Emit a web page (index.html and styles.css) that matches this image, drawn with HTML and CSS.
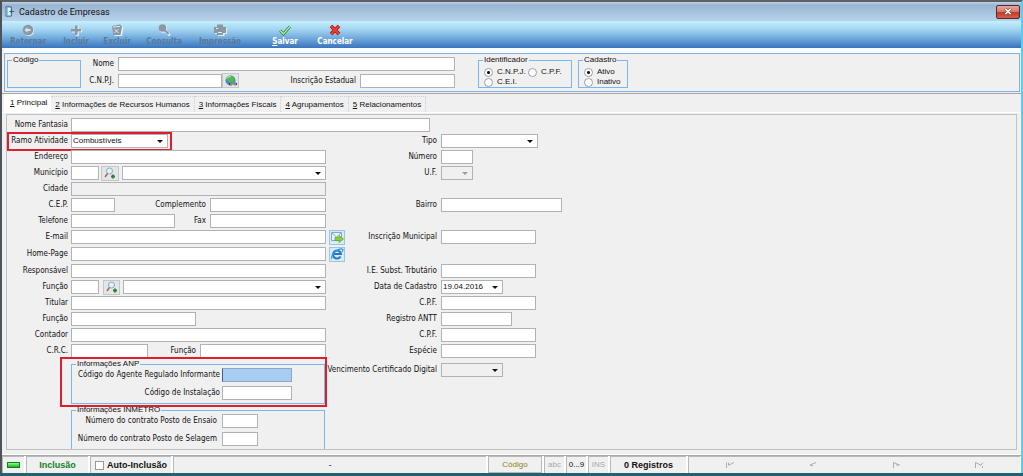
FILE: index.html
```html
<!DOCTYPE html>
<html lang="pt-BR">
<head>
<meta charset="utf-8">
<title>Cadastro de Empresas</title>
<link rel="stylesheet" href="styles.css">
</head>
<body>
<div class="window">
  <header class="titlebar">
    <svg class="title-icon" viewBox="0 0 12 12"><path d="M2 1h6v10H2z" fill="#e8f4fc" stroke="#24567f"/><path d="M1 3l3-2v10l-3-1z" fill="#6fa8cf"/><path d="M6 6h5M8 4v4" stroke="#24567f" fill="none"/></svg>
    <h1 class="title">Cadastro de Empresas</h1>
    <button class="close" aria-label="Fechar"><svg viewBox="0 0 8 8"><path d="M1 1l6 6M7 1L1 7" stroke="#5b2a2a" stroke-width="3"/><path d="M1 1l6 6M7 1L1 7" stroke="#fff" stroke-width="1.8"/></svg></button>
  </header>

  <nav class="toolbar">
    <button class="tool tool-retornar" disabled><svg viewBox="0 0 14 12"><circle cx="7.8" cy="6.7" r="5.3" fill="#dceffa"/><circle cx="7" cy="6" r="5.3" fill="#8b98a0"/><path d="M9.5 5H6.5V3L3.5 6l3 3V7h3z" fill="#d5e4ec"/></svg><span>Retornar</span></button>
    <button class="tool tool-incluir" disabled><svg viewBox="0 0 14 12"><path d="M6.800 2.300h3v3.500h3.500v2.500H9.800V12h-3V8.500H3V5.800h3.800z" fill="#dceffa"/><path d="M6 1.500h2.500V5H12v2.500H8.500V11H6V7.500H2V5h4z" fill="#8b98a0"/></svg><span>Incluir</span></button>
    <button class="tool tool-excluir" disabled><svg viewBox="0 0 14 12"><path d="M3 3l9.500-1 1 2L12 12H4.500z" fill="#dceffa"/><path d="M2 2l8-1.500 2 2L10.500 11h-7z" fill="#8b98a0"/><path d="M4.500 5l4 4M8.500 5l-4 4M3 3l7-.5" stroke="#dceffa" fill="none"/></svg><span>Excluir</span></button>
    <button class="tool tool-consulta" disabled><svg viewBox="0 0 14 12"><circle cx="6.300" cy="4.800" r="4" fill="#dceffa"/><path d="M8 7l5 4.500" stroke="#dceffa" stroke-width="2.500"/><circle cx="5.500" cy="4" r="3.800" fill="#8b98a0"/><path d="M7.500 6l4 4" stroke="#8b98a0" stroke-width="2"/></svg><span>Consulta</span></button>
    <button class="tool tool-impressao" disabled><svg viewBox="0 0 14 12"><path d="M2 4h12v6h-2.500V12H5V10H2z" fill="#dceffa"/><path d="M4 .5h6V3h3v6h-3v2H4V9H1V3h3z" fill="#8b98a0"/><path d="M5 8.500h4M3 4.500h2" stroke="#dceffa"/></svg><span>Impressão</span></button>
    <button class="tool tool-salvar"><svg viewBox="0 0 14 12"><path d="M2 6.500l3.500 3.500L12 2.500" stroke="#2f8a3c" stroke-width="2.800" fill="none"/><path d="M2 6.500l3.500 3.300L12 2.500" stroke="#b9f0a8" stroke-width="1.200" fill="none"/></svg><span><u>S</u>alvar</span></button>
    <button class="tool tool-cancelar"><svg viewBox="0 0 14 12"><path d="M3 2l8 8M11 2l-8 8" stroke="#a01414" stroke-width="3.600"/><path d="M3 2l8 8M11 2l-8 8" stroke="#f0402c" stroke-width="2"/></svg><span>Cancelar</span></button>
  </nav>

  <section class="head">
    <fieldset class="group group-codigo"><legend>Código</legend></fieldset>
    <div class="head-fields">
      <div class="line"><label class="head-label" for="nome">Nome</label><input class="field grow" id="nome"></div>
      <div class="line"><label class="head-label" for="cnpj">C.N.P.J.</label><input class="field w104" id="cnpj"><button class="mini" aria-label="Consultar CNPJ"><svg viewBox="0 0 14 12"><circle cx="6.500" cy="5.500" r="5" fill="#3f8fd0"/><path d="M2 4c2-4 7-4 8.500-1.500L10 6 7 9C5 9 5 6 2 4z" fill="#55b848"/><path d="M3 3.500c1-1.500 2-2 3.500-2" stroke="#dff2ff" fill="none"/><path d="M6 9h1.500M10.500 9h1.500" stroke="#444" stroke-width="2.400" stroke-linecap="round"/><path d="M6 9h6" stroke="#ccc"/></svg></button><label class="push" for="ie">Inscrição Estadual</label><input class="field w95" id="ie"></div>
    </div>
    <fieldset class="group group-ident"><legend>Identificador</legend>
      <label class="opt"><input type="radio" name="ident" checked>C.N.P.J.</label><label class="opt"><input type="radio" name="ident">C.P.F.</label><label class="opt"><input type="radio" name="ident">C.E.I.</label>
    </fieldset>
    <fieldset class="group group-cad"><legend>Cadastro</legend>
      <label class="opt"><input type="radio" name="cad" checked>Ativo</label><label class="opt"><input type="radio" name="cad">Inativo</label>
    </fieldset>
  </section>

  <div class="tabs" role="tablist">
    <button class="tab active" role="tab" aria-selected="true"><u>1</u> Principal</button>
    <button class="tab" role="tab"><u>2</u> Informações de Recursos Humanos</button>
    <button class="tab" role="tab"><u>3</u> Informações Fiscais</button>
    <button class="tab" role="tab"><u>4</u> Agrupamentos</button>
    <button class="tab" role="tab"><u>5</u> Relacionamentos</button>
  </div>

  <main class="page">
    <form class="panel">
      <div class="row"><label class="lbl" for="fantasia">Nome Fantasia</label><input class="field w360" id="fantasia"></div>
      <div class="row">
        <div class="mark mark-ramo"><label class="lbl" for="ramo">Ramo Atividade</label><span class="pick w96"><select id="ramo"><option>Combustíveis</option></select></span></div>
        <label class="rlbl" for="tipo">Tipo</label><span class="pick w96"><select id="tipo"><option></option></select></span>
      </div>
      <div class="row"><label class="lbl" for="end">Endereço</label><div class="cell"><input class="field w255" id="end"></div><label class="rlbl" for="num">Número</label><input class="field w31" id="num"></div>
      <div class="row"><label class="lbl" for="mun">Município</label><div class="cell"><input class="field w28" id="mun"><button type="button" class="mini gap2" aria-label="Buscar município"><svg viewBox="0 0 14 12"><circle cx="6.500" cy="4" r="3" fill="#e4f2fb" stroke="#8ab"/><path d="M4.500 6.500L2 10" stroke="#a86a4a" stroke-width="1.500"/><path d="M10 7.500v4M8 9.500h4" stroke="#2f7d3a" stroke-width="1.800"/></svg></button><span class="pick grow"><select aria-label="Município"><option></option></select></span></div><label class="rlbl" for="uf">U.F.</label><span class="pick off w31"><select id="uf" disabled><option></option></select></span></div>
      <div class="row"><label class="lbl" for="cid">Cidade</label><div class="cell"><input class="field off w255" id="cid" disabled></div></div>
      <div class="row"><label class="lbl" for="cep">C.E.P.</label><div class="cell"><input class="field w44" id="cep"><label class="push" for="comp">Complemento</label><input class="field w116" id="comp"></div><label class="rlbl" for="bairro">Bairro</label><input class="field w121" id="bairro"></div>
      <div class="row"><label class="lbl" for="tel">Telefone</label><div class="cell"><input class="field w104" id="tel"><label class="push" for="fax">Fax</label><input class="field w116" id="fax"></div></div>
      <div class="row"><label class="lbl" for="mail">E-mail</label><div class="cell out"><input class="field w255" id="mail"><button type="button" class="mini blue" aria-label="Enviar e-mail"><svg viewBox="0 0 14 12"><path d="M1.500 1.500h10v8h-10z" fill="#e6f3fb" stroke="#7fa9c6"/><path d="M2 2l4.500 4L11 2" fill="none" stroke="#7fa9c6"/><path d="M5 6.500h4V4.500l4.500 3.500L9 11.500V9.500H5z" fill="#8bd03a" stroke="#4d9a1c" stroke-width=".6"/></svg></button></div><label class="rlbl" for="im">Inscrição Municipal</label><input class="field w95" id="im"></div>
      <div class="row spaced"><label class="lbl" for="home">Home-Page</label><div class="cell out"><input class="field w255" id="home"><button type="button" class="mini blue" aria-label="Abrir página"><svg viewBox="0 0 14 12"><path d="M10.500 8.500A4 4 0 1 1 11 6H4" fill="none" stroke="#1f78c8" stroke-width="2"/><path d="M2 11C0 7 9-1 13 1.500c0 1-.5 1.500-1 2.500" fill="none" stroke="#3b95dc" stroke-width="1.200"/></svg></button></div></div>
      <div class="row"><label class="lbl" for="resp">Responsável</label><div class="cell"><input class="field w255" id="resp"></div><label class="rlbl" for="ies">I.E. Subst. Trbutário</label><input class="field w95" id="ies"></div>
      <div class="row"><label class="lbl" for="func">Função</label><div class="cell"><input class="field w28" id="func"><button type="button" class="mini gap4" aria-label="Buscar função"><svg viewBox="0 0 14 12"><circle cx="6.500" cy="4" r="3" fill="#e4f2fb" stroke="#8ab"/><path d="M4.500 6.500L2 10" stroke="#a86a4a" stroke-width="1.500"/><path d="M10 7.500v4M8 9.500h4" stroke="#2f7d3a" stroke-width="1.800"/></svg></button><span class="pick grow"><select aria-label="Função"><option></option></select></span></div><label class="rlbl" for="data">Data de Cadastro</label><span class="pick w62"><select id="data"><option>19.04.2016</option></select></span></div>
      <div class="row"><label class="lbl" for="tit">Titular</label><div class="cell"><input class="field w255" id="tit"></div><label class="rlbl" for="cpf1">C.P.F.</label><input class="field w95" id="cpf1"></div>
      <div class="row"><label class="lbl" for="func2">Função</label><div class="cell"><input class="field w125" id="func2"></div><label class="rlbl" for="antt">Registro ANTT</label><input class="field w71" id="antt"></div>
      <div class="row"><label class="lbl" for="cont">Contador</label><div class="cell"><input class="field w255" id="cont"></div><label class="rlbl" for="cpf2">C.P.F.</label><input class="field w95" id="cpf2"></div>
      <div class="row"><label class="lbl" for="crc">C.R.C.</label><div class="cell"><input class="field w77" id="crc"><label class="push" for="func3">Função</label><input class="field w126" id="func3"></div><label class="rlbl" for="esp">Espécie</label><input class="field w95" id="esp"></div>
      <div class="row bottom">
        <div class="boxes">
          <div class="mark mark-anp">
            <fieldset class="group anp"><legend>Informações ANP</legend>
              <div class="boxrow"><label for="agente">Código do Agente Regulado Informante</label><input class="field focus w70" id="agente"></div>
              <div class="boxrow"><label for="inst">Código de Instalação</label><input class="field w70" id="inst"></div>
            </fieldset>
          </div>
          <fieldset class="group inmetro"><legend>Informações INMETRO</legend>
            <div class="boxrow"><label for="ensaio">Número do contrato Posto de Ensaio</label><input class="field w36" id="ensaio"></div>
            <div class="boxrow"><label for="selagem">Número do contrato Posto de Selagem</label><input class="field w36" id="selagem"></div>
          </fieldset>
        </div>
        <label class="rlbl" for="venc">Vencimento Certificado Digital</label><span class="pick pale w62"><select id="venc"><option></option></select></span>
      </div>
    </form>
  </main>

  <footer class="status">
    <div class="st st-led"><i class="led"></i></div>
    <div class="st st-mode">Inclusão</div>
    <label class="st st-auto"><input type="checkbox">Auto-Inclusão</label>
    <div class="st st-msg">-</div>
    <div class="st st-code">Código</div>
    <div class="st st-key dim">abc</div>
    <div class="st st-key">0...9</div>
    <div class="st st-key dim">INS</div>
    <div class="st st-count">0 Registros</div>
    <div class="st st-nav">
      <button aria-label="Primeiro" disabled><svg viewBox="0 0 10 8"><path d="M1.500 7V1.500M9 1.500L4 4M3.500 1.500v3" /></svg></button>
      <button aria-label="Anterior" disabled><svg viewBox="0 0 10 8"><path d="M8 1.500L2 4l3 1"/></svg></button>
      <button aria-label="Próximo" disabled><svg viewBox="0 0 10 8"><path d="M2.500 7V1.500l6 2.500H5"/></svg></button>
      <button aria-label="Último" disabled><svg viewBox="0 0 10 8"><path d="M1.500 7V1.500l5 2.500M9 1.500L6 5M8.500 5v2"/></svg></button>
    </div>
  </footer>
</div>
</body>
</html>
```
FILE: styles.css
```css
* { box-sizing: border-box; }

body {
  margin: 0;
  height: 100vh;
  overflow: hidden;
  background: #25606f;
  color: #111;
  font: 8px/10px "DejaVu Sans Condensed", "DejaVu Sans", sans-serif;
}

button, input, select { font: inherit; color: inherit; margin: 0; padding: 0; border-radius: 0; }
svg { display: block; fill: none; }
label { white-space: nowrap; }

.window {
  display: flex;
  flex-direction: column;
  height: calc(100vh - 3px);
  border-top: 2px solid #5c5f63;
  border-left: 2px solid #4d5358;
  border-right: 2px solid #59cdf0;
  background: #f0f0f0;
}

/* title bar */
.titlebar {
  display: flex;
  align-items: center;
  flex: none;
  height: 19px;
  padding: 0 1px 0 2px;
  background: linear-gradient(#c3d3e6 0, #9ab5d2 3px, #b9d2ea);
}
.title-icon { width: 11px; height: 11px; }
.title { flex: 1; margin: 0 0 0 4px; font: 9px/12px Roboto, sans-serif; color: #111; }
.close {
  display: grid;
  place-items: center;
  width: 24px;
  height: 14px;
  border: 1px solid #542832;
  border-radius: 2px;
  background: linear-gradient(#e9a79b, #d8776a 48%, #bf3a27 52%, #d5604b);
}
.close svg { width: 8px; height: 7px; }

/* toolbar */
.toolbar {
  display: flex;
  flex: none;
  height: 27px;
  background: linear-gradient(#c3f0fd, #a5d6f2 30%, #6ea8db 65%, #3a74bd);
}
.tool {
  display: flex;
  flex-direction: column;
  align-items: center;
  gap: 1px;
  padding-top: 3px;
  border: 0;
  background: none;
  color: #fff;
  font-weight: bold;
  line-height: 10px;
}
.tool svg { width: 14px; height: 12px; }
.tool:disabled { color: #58799b; }
.tool-retornar { width: 52px; }
.tool-incluir { width: 44px; }
.tool-excluir { width: 38px; }
.tool-consulta, .tool-impressao { width: 56px; }
.tool-salvar { width: 50px; margin-left: 12px; }
.tool-cancelar { width: 50px; }

/* record header */
.head {
  display: flex;
  flex: none;
  height: 39px;
  margin: 5px 1px 1px 2px;
  padding: 2px;
  border: 1px solid #7fb2e2;
  box-shadow: 0 -5px 0 #fafcff;
}
.group {
  min-width: 0;
  margin: 0;
  padding: 0;
  border: 1px solid #79b7ec;
}
.group legend {
  margin-left: 4px;
  padding: 0 1px;
  font: 8px/8px "Liberation Sans", sans-serif;
}
.group-codigo { width: 74px; height: 32px; }
.head-fields { width: 374px; display: flex; flex-direction: column; gap: 2px; }
.line { display: flex; align-items: center; height: 15px; }
.head-label { width: 33px; margin-right: 4px; text-align: right; }
.push { margin-left: auto; margin-right: 4px; }
.grow { flex: 1; }
.group-ident, .group-cad {
  display: grid;
  grid-auto-rows: 10px;
  height: 32px;
  padding: 3px 0 0 5px;
}
.group-ident { grid-template-columns: 44px 1fr; width: 94px; margin-left: 23px; }
.group-cad { width: 50px; margin-left: 6px; }
.group-ident legend, .group-cad legend { margin-left: -1px; }
.opt {
  display: flex;
  align-items: center;
  gap: 4px;
  font: 8px/10px "Liberation Sans", sans-serif;
}
.opt input {
  appearance: none;
  flex: none;
  width: 9px;
  height: 9px;
  border: 1px solid #9a9fa5;
  border-radius: 50%;
  background: #fff;
}
.opt input:checked { background: radial-gradient(circle, #111 0 1px, #fff 2px); }

/* inputs */
.field, .pick { height: 14px; border: 1px solid #b0b2b5; background: #fff; min-width: 0; }
.off { background: #f0f0f0; }
.focus { background: #a9cdf2; border-color: #8ba8c8; border-left-color: #3b5f8c; }
.pick { display: flex; position: relative; }
.pick::after {
  content: "";
  position: absolute;
  right: 4px;
  top: 5px;
  border: 3px solid transparent;
  border-top: 3px solid #111;
  border-bottom: 0;
  pointer-events: none;
}
.pick.off::after { border-top-color: #9b9b9b; }
.pick.pale { background: #f0f0f0; }
.pick select {
  appearance: none;
  flex: 1;
  width: 100%;
  border: 0;
  padding: 0 1px;
  background: none;
  font: 8px/12px "Liberation Sans", sans-serif;
  color: #111;
}
.mini {
  display: grid;
  place-items: center;
  flex: none;
  width: 17px;
  height: 15px;
  border: 1px solid #c4c6c8;
  background: #e4e5e6;
}
.mini svg { width: 14px; height: 12px; }
.mini.blue { width: 16px; margin-left: 3px; border-color: #9cc4e0; background: #d8eaf6; }
.mini.gap2 { margin: 0 3px 0 2px; width: 18px; }
.mini.gap4 { margin: 0 3px 0 4px; }

.w28 { width: 28px; }
.w31 { width: 32px; }
.w36 { width: 36px; }
.w44 { width: 44px; }
.w62 { width: 62px; }
.w70 { width: 70px; }
.w71 { width: 71px; }
.w77 { width: 77px; }
.w95 { width: 95px; }
.w96 { width: 97px; }
.w104 { width: 104px; }
.w116 { width: 116px; }
.w121 { width: 121px; }
.w125 { width: 125px; }
.w126 { width: 126px; }
.w255 { width: 255px; }
.w360 { width: 359px; }

/* tabs */
.tabs {
  display: flex;
  flex: none;
  height: 19px;
  padding-left: 2px;
  border-top: 1px solid #a5a5a5;
  align-items: flex-end;
}
.tab {
  height: 16px;
  padding: 0 4px;
  border: 1px dotted #d0d0d0;
  border-width: 1px 1px 0 0;
  background: none;
  font: 8px/12px "Liberation Sans", sans-serif;
}
.tab.active { height: 18px; padding: 0 4px 1px 6px; background: #fff; border: 0; }

/* tab page */
.page {
  display: flex;
  flex: 1;
  min-height: 0;
  padding: 1px 3px 4px 4px;
  border: solid #fff;
  border-width: 1px 1px 1px 0;
}
.panel {
  flex: 1;
  display: flex;
  flex-direction: column;
  gap: 2px;
  padding: 3px 0 0 1px;
  overflow: hidden;
  border: 1px solid #bfc2c4;
}
.row { display: flex; align-items: center; flex: none; height: 14px; }
.row.spaced { margin: 1px 0; }
.lbl { width: 60px; margin-right: 3px; text-align: right; }
.cell { display: flex; align-items: center; width: 255px; }
.cell.out .mini { margin-right: -19px; }
.rlbl { width: 111px; margin-right: 4px; text-align: right; }

/* highlighted areas */
.mark { outline: 2px solid #dd1f2b; }
.mark-ramo { display: flex; align-items: center; width: 163px; height: 17px; margin-right: 155px; outline-offset: -1px; }
.mark-anp { margin: 0 1px 0 -9px; padding: 1px 0 1px 9px; }

.row.bottom { align-items: flex-start; height: auto; margin-top: -1px; }
.boxes { width: 255px; margin-left: 63px; }
.bottom .rlbl { margin-top: 6px; }
.bottom .pick { margin-top: 4px; }
.anp, .inmetro { display: flex; flex-direction: column; align-items: flex-end; }
.anp { height: 44px; gap: 4px; padding-right: 32px; }
.inmetro { height: 52px; margin: 1px 1px 0 0; gap: 4px; padding-right: 66px; }
.boxrow { display: flex; align-items: center; gap: 2px; height: 14px; }
.inmetro .boxrow { gap: 5px; }

/* status bar */
.status {
  display: flex;
  flex: none;
  gap: 2px;
  height: 18px;
  padding-right: 1px;
  border-top: 1px solid #a9a9a9;
  background: #fff;
  font: 8px/16px "Liberation Sans", sans-serif;
}
.st {
  display: flex;
  align-items: center;
  justify-content: center;
  flex: none;
  background: #f0f0f0;
  border: 1px solid #b8b8b8;
  border-width: 1px 0 0 1px;
}
.st-led { width: 22px; }
.led { width: 13px; height: 6px; border: 1px solid #147a1c; background: linear-gradient(#8dff86, #17b51f); }
.st-mode { width: 62px; color: #12821c; font: bold 9px/12px "Liberation Sans", sans-serif; }
.st-auto { width: 81px; gap: 3px; font: bold 9px/12px "Liberation Sans", sans-serif; }
.st-auto input { appearance: none; width: 9px; height: 9px; margin: 0; border: 1px solid #9a9a9a; background: #fff; }
.st-msg { flex: 1; color: #1f3fa0; font-weight: bold; }
.st-code { width: 54px; color: #87861c; border-width: 1px; }
.st-key { width: 20px; }
.dim { color: #a8a8a8; }
.st-count { width: 76px; font: bold 9px/12px "Liberation Sans", sans-serif; }
.st-nav { width: 332px; justify-content: space-around; }
.st-nav button { border: 0; background: none; }
.st-nav svg { width: 10px; height: 8px; stroke: #a9acb0; }
```
